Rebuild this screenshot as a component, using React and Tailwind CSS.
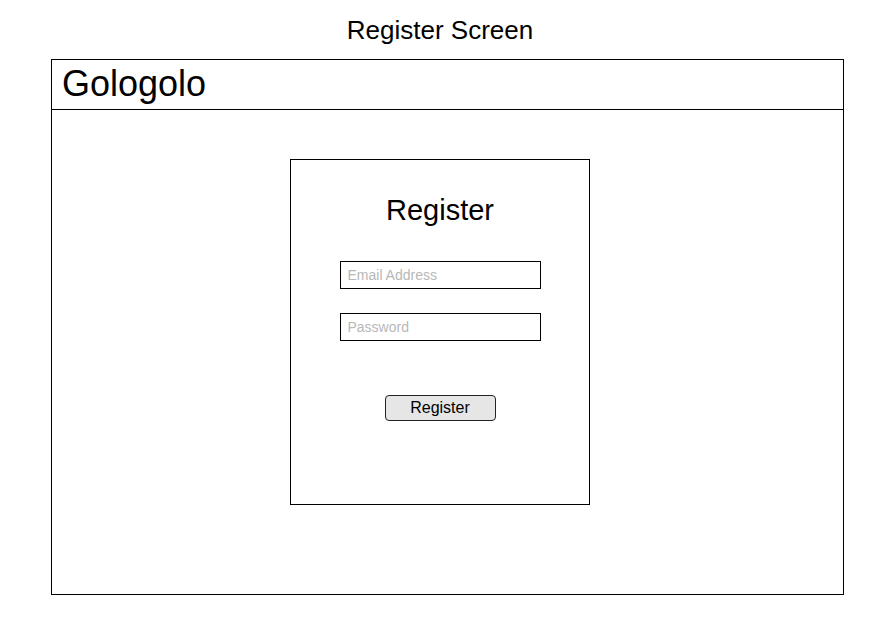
import React from "react";

export default function App() {
  return (
    <div
      className="w-[893px] h-[625px] bg-white text-black"
      style={{ fontFamily: '"Liberation Sans", Arial, sans-serif' }}
    >
      <div className="h-[59px] flex items-center justify-center pr-[13px]">
        <span className="text-[26px] leading-none">Register Screen</span>
      </div>
      <div className="ml-[51px] w-[793px] h-[536px] border border-black flex flex-col">
        <div className="h-[50px] border-b border-black flex items-center pl-[10px] pb-[1px]">
          <span className="text-[36px] leading-none">Gologolo</span>
        </div>
        <div className="flex-1 pl-[238px] pt-[49px]">
          <div className="w-[300px] h-[346px] border border-black flex flex-col items-center pt-[34px]">
            <h1 className="text-[29px] leading-[32px]">Register</h1>
            <input
              type="text"
              placeholder="Email Address"
              className="mt-[35px] w-[201px] h-[28px] border border-black px-[7px] text-[14px] outline-none placeholder:text-[#b8b8b8]"
            />
            <input
              type="password"
              placeholder="Password"
              className="mt-[24px] w-[201px] h-[28px] border border-black px-[7px] text-[14px] outline-none placeholder:text-[#b8b8b8]"
            />
            <button className="mt-[54px] w-[111px] h-[26px] border border-[#222] rounded-[4px] bg-[#e6e6e6] text-[16px] leading-none">
              Register
            </button>
          </div>
        </div>
      </div>
    </div>
  );
}
